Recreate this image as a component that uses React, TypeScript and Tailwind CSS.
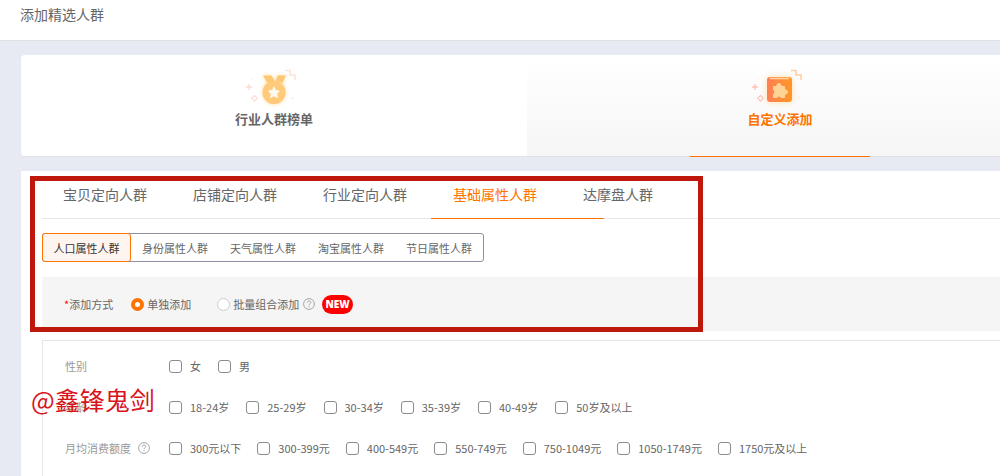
import React, { useState } from 'react';
import clsx from 'clsx';

const audienceTabs = ['宝贝定向人群', '店铺定向人群', '行业定向人群', '基础属性人群', '达摩盘人群'];
const attributeTabs = ['人口属性人群', '身份属性人群', '天气属性人群', '淘宝属性人群', '节日属性人群'];

const filters = [
  { label: '性别', help: false, gap: 'gap-[17px]', options: ['女', '男'] },
  {
    label: '年龄',
    help: false,
    gap: 'gap-[17px]',
    options: ['18-24岁', '25-29岁', '30-34岁', '35-39岁', '40-49岁', '50岁及以上'],
  },
  {
    label: '月均消费额度',
    help: true,
    gap: 'gap-4',
    options: ['300元以下', '300-399元', '400-549元', '550-749元', '750-1049元', '1050-1749元', '1750元及以上'],
  },
];

function Sparks({ accent, zigzag }: { accent: string; zigzag: string }) {
  return (
    <g fill="none">
      <path d="M1 18h6M4 15v6" stroke={accent} strokeWidth="1.4" />
      <path d="M9.500 26.500l2.800 2.800-2.800 2.800-2.800-2.800z" stroke={accent} strokeWidth="1.200" />
      <path d="M40 1.500h5v4.500h5v5" stroke={zigzag} strokeWidth="1.600" />
      <circle cx="47.500" cy="29" r="1.500" fill="#fff4e3" />
      <circle cx="7" cy="10" r="1" fill="#fff4ea" />
    </g>
  );
}

function MedalIcon() {
  return (
    <svg width="58" height="38" viewBox="0 0 58 38" aria-hidden="true" className="overflow-visible">
      <Sparks accent="#fddcd6" zigzag="#fde3d8" />
      <g className="drop-shadow-[0_0_2px_#ffdc9c]">
        <path d="M18 6.500h8.500l3 5.500-5.500 2-2.500-1.500z" fill="#ffc773" />
        <path d="M32.500 6.500H41l-3.500 7.500-6.500-2z" fill="#ffc773" />
        <circle cx="29" cy="23.500" r="11.500" fill="#ffca7a" />
      </g>
      <path
        d="M29 18l1.700 3.500 3.800.6-2.800 2.700.7 3.800-3.400-1.800-3.400 1.800.7-3.800-2.800-2.700 3.800-.6z"
        fill="#fffaf0"
        stroke="#fffaf0"
        strokeLinejoin="round"
      />
    </svg>
  );
}

function PuzzleIcon() {
  return (
    <svg width="58" height="38" viewBox="0 0 58 38" aria-hidden="true" className="overflow-visible">
      <defs>
        <linearGradient id="puzzle-fill">
          <stop offset="0" stopColor="#ff8055" />
          <stop offset="1" stopColor="#ff9626" />
        </linearGradient>
      </defs>
      <Sparks accent="#ffc2b5" zigzag="#ffd0a6" />
      <g className="drop-shadow-[0_0_3px_#ffdca4]">
        <rect x="16" y="8" width="25" height="25" rx="3" fill="url(#puzzle-fill)" />
      </g>
      <path d="M19.500 9.500h18" stroke="#ffd6a3" strokeWidth="1.300" strokeLinecap="round" />
      <path
        d="M22.500 17.500h3.300a2.300 2.300 0 1 1 4.400 0h3.300v3.300a2.300 2.300 0 1 1 0 4.400v3.300h-3.600a2 2 0 0 0-3.800 0h-3.600v-3.600a2 2 0 0 0 0-3.800z"
        fill="#ffd295"
        stroke="#ffd295"
        strokeLinejoin="round"
      />
    </svg>
  );
}

function HelpIcon() {
  return (
    <svg width="12" height="12" viewBox="0 0 12 12" fill="none" stroke="#a6a6a6" aria-hidden="true" className="shrink-0">
      <circle cx="6" cy="6" r="5.400" />
      <path d="M4.300 4.700c0-2.400 3.500-2.300 3.500-.2C7.800 5.700 6 5.700 6 7.300M6 8.200v1.200" />
    </svg>
  );
}

export default function App() {
  const [source, setSource] = useState('custom');
  const [audience, setAudience] = useState('基础属性人群');
  const [attribute, setAttribute] = useState('人口属性人群');
  const [mode, setMode] = useState('single');

  const sources = [
    { id: 'industry', name: '行业人群榜单', icon: <MedalIcon /> },
    { id: 'custom', name: '自定义添加', icon: <PuzzleIcon /> },
  ];
  const modes = [
    { id: 'single', name: '单独添加' },
    { id: 'batch', name: '批量组合添加' },
  ];

  return (
    <div className="flex min-h-screen flex-col overflow-hidden bg-[#e7eaf3] font-['Noto_Sans_CJK_SC',sans-serif] text-[11px] leading-4 text-[#666]">
      <header className="border-b border-[#e2e2e4] bg-white px-5 pt-1 pb-4">
        <h1 className="text-sm leading-5">添加精选人群</h1>
      </header>

      <main className="flex flex-1 flex-col gap-3.5 pt-3.5 pl-[21px]">
        <div className="-mr-[33px] grid grid-cols-2 rounded-sm border-b border-[#e0e2e8] bg-white">
          {sources.map((item) => (
            <button
              key={item.id}
              type="button"
              onClick={() => setSource(item.id)}
              className={clsx(
                'relative flex h-[101px] flex-col items-center gap-0.5 pt-3.5 text-[13px] leading-5 font-bold',
                source === item.id &&
                  'bg-linear-to-b from-white to-[#f6f6f6] text-[#ff7300] after:absolute after:-bottom-px after:h-px after:w-[180px] after:bg-[#ff7300]',
              )}
            >
              {item.icon}
              <span>{item.name}</span>
            </button>
          ))}
        </div>

        <section className="relative flex-1 bg-white pl-[21px]">
          <nav className="flex h-12 border-b border-[#e6e6e6]">
            {audienceTabs.map((name) => (
              <button
                key={name}
                type="button"
                onClick={() => setAudience(name)}
                className={clsx(
                  'relative w-[130px] pb-0.5 pl-[21px] text-left text-sm',
                  audience === name &&
                    'text-[#ff7300] after:absolute after:-bottom-px after:-left-px after:h-px after:w-[173px] after:bg-[#ff7300]',
                )}
              >
                {name}
              </button>
            ))}
          </nav>

          <div className="mt-3.5 inline-flex h-[29px] rounded-[3px] border border-[#8e91a6] align-top">
            {attributeTabs.map((name) => (
              <button
                key={name}
                type="button"
                onClick={() => setAttribute(name)}
                className={clsx(
                  attribute === name
                    ? '-my-px -ml-px w-[89px] rounded-[3px] border border-[#ff7300] bg-[#fff5f0] text-[#333]'
                    : 'w-[88px]',
                )}
              >
                {name}
              </button>
            ))}
          </div>

          <fieldset className="mt-[15px] flex h-[54px] items-center bg-[#f5f5f5] pl-[22px]">
            <div className="mr-[18px]">
              <span className="text-[#f00]">*</span>添加方式
            </div>
            {modes.map((item) => (
              <label key={item.id} className="mr-[26px] flex items-center gap-[3px] last-of-type:mr-1">
                <input
                  type="radio"
                  name="mode"
                  checked={mode === item.id}
                  onChange={() => setMode(item.id)}
                  className="size-[13px] appearance-none rounded-full border border-[#ccc] bg-white checked:border-4 checked:border-[#ff7300]"
                />
                {item.name}
              </label>
            ))}
            <HelpIcon />
            <span className="ml-[7px] flex h-[19px] w-[31px] items-center justify-center rounded-full bg-[#f00] font-['Open_Sans',sans-serif] text-[10px] font-extrabold text-white">
              NEW
            </span>
          </fieldset>

          <div className="mt-[9px] flex flex-col gap-[25px] border-t border-l border-[#e6e6e6] pt-[17px] pb-5 pl-[22px]">
            {filters.map((row) => (
              <fieldset key={row.label} className="flex items-center">
                <div className="flex w-[104px] shrink-0 items-center gap-[7px] text-[#999]">
                  {row.label}
                  {row.help && <HelpIcon />}
                </div>
                <div className={clsx('flex', row.gap)}>
                  {row.options.map((option) => (
                    <label key={option} className="flex items-center gap-2 whitespace-nowrap">
                      <input
                        type="checkbox"
                        className="size-[13px] appearance-none rounded-[3px] border border-[#8c8c8c] bg-white checked:bg-[#ff7300]"
                      />
                      {option}
                    </label>
                  ))}
                </div>
              </fieldset>
            ))}
          </div>

          {/* Annotation frame and signature over the form */}
          <div className="pointer-events-none absolute top-[5px] left-[9px] h-[156px] w-[673px] border-5 border-[#be170b]" />
          <div className="pointer-events-none absolute top-[212px] left-2.5 text-[25px] leading-8 text-[#d8141c]">
            @鑫锋鬼剑
          </div>
        </section>
      </main>
    </div>
  );
}
